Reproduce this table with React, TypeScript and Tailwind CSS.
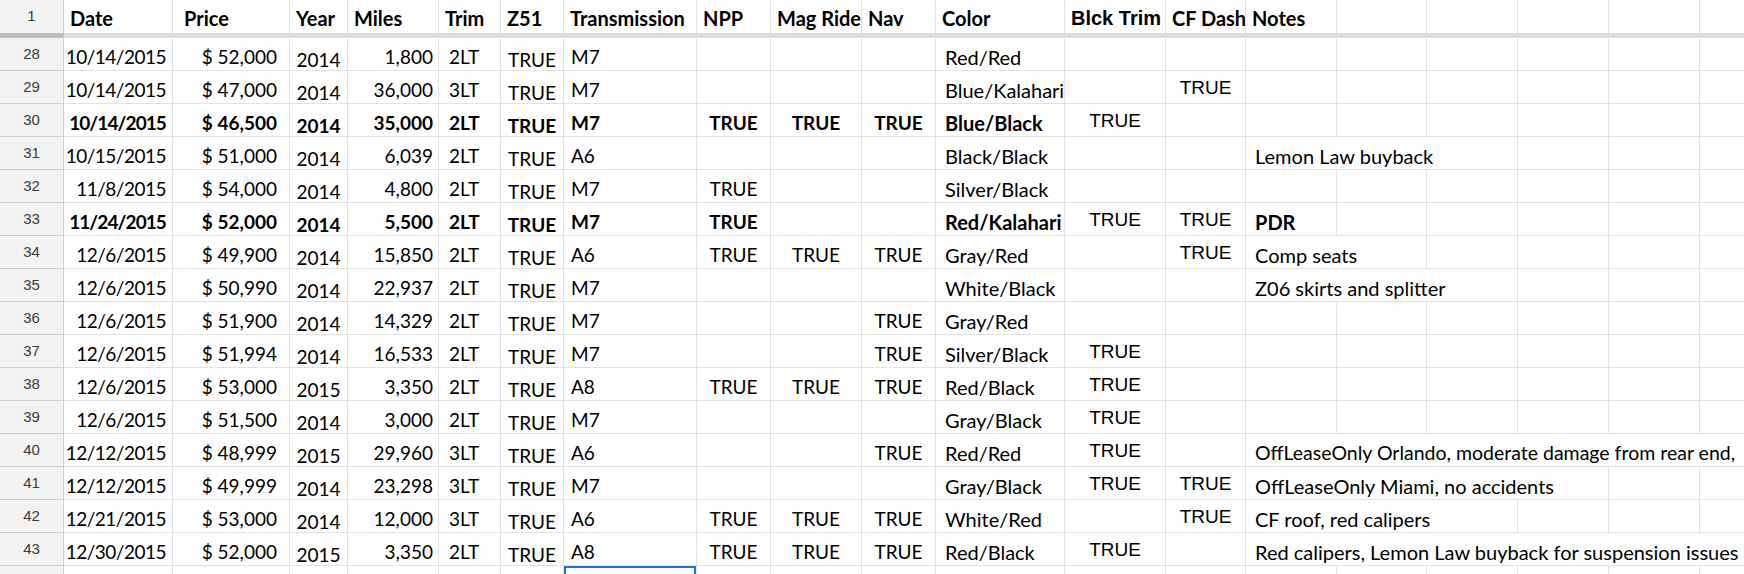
type Row = {
  n: number;
  bold?: boolean;
  date: string;
  price: string;
  year: string;
  miles: string;
  trim: string;
  trans: string;
  npp?: boolean;
  mag?: boolean;
  nav?: boolean;
  color: string;
  blck?: boolean;
  cf?: boolean;
  notes?: string;
  span?: number;
  tight?: boolean;
};

const rows: Row[] = [
  { n: 28, date: '10/14/2015', price: '$ 52,000', year: '2014', miles: '1,800', trim: '2LT', trans: 'M7', color: 'Red/Red' },
  { n: 29, date: '10/14/2015', price: '$ 47,000', year: '2014', miles: '36,000', trim: '3LT', trans: 'M7', color: 'Blue/Kalahari', cf: true },
  { n: 30, bold: true, date: '10/14/2015', price: '$ 46,500', year: '2014', miles: '35,000', trim: '2LT', trans: 'M7', npp: true, mag: true, nav: true, color: 'Blue/Black', blck: true },
  { n: 31, date: '10/15/2015', price: '$ 51,000', year: '2014', miles: '6,039', trim: '2LT', trans: 'A6', color: 'Black/Black', notes: 'Lemon Law buyback', span: 3 },
  { n: 32, date: '11/8/2015', price: '$ 54,000', year: '2014', miles: '4,800', trim: '2LT', trans: 'M7', npp: true, color: 'Silver/Black' },
  { n: 33, bold: true, date: '11/24/2015', price: '$ 52,000', year: '2014', miles: '5,500', trim: '2LT', trans: 'M7', npp: true, color: 'Red/Kalahari', blck: true, cf: true, notes: 'PDR' },
  { n: 34, date: '12/6/2015', price: '$ 49,900', year: '2014', miles: '15,850', trim: '2LT', trans: 'A6', npp: true, mag: true, nav: true, color: 'Gray/Red', cf: true, notes: 'Comp seats', span: 2 },
  { n: 35, date: '12/6/2015', price: '$ 50,990', year: '2014', miles: '22,937', trim: '2LT', trans: 'M7', color: 'White/Black', notes: 'Z06 skirts and splitter', span: 3 },
  { n: 36, date: '12/6/2015', price: '$ 51,900', year: '2014', miles: '14,329', trim: '2LT', trans: 'M7', nav: true, color: 'Gray/Red' },
  { n: 37, date: '12/6/2015', price: '$ 51,994', year: '2014', miles: '16,533', trim: '2LT', trans: 'M7', nav: true, color: 'Silver/Black', blck: true },
  { n: 38, date: '12/6/2015', price: '$ 53,000', year: '2015', miles: '3,350', trim: '2LT', trans: 'A8', npp: true, mag: true, nav: true, color: 'Red/Black', blck: true },
  { n: 39, date: '12/6/2015', price: '$ 51,500', year: '2014', miles: '3,000', trim: '2LT', trans: 'M7', color: 'Gray/Black', blck: true },
  { n: 40, date: '12/12/2015', price: '$ 48,999', year: '2015', miles: '29,960', trim: '3LT', trans: 'A6', nav: true, color: 'Red/Red', blck: true, notes: 'OffLeaseOnly Orlando, moderate damage from rear end,', span: 6, tight: true },
  { n: 41, date: '12/12/2015', price: '$ 49,999', year: '2014', miles: '23,298', trim: '3LT', trans: 'M7', color: 'Gray/Black', blck: true, cf: true, notes: 'OffLeaseOnly Miami, no accidents', span: 4 },
  { n: 42, date: '12/21/2015', price: '$ 53,000', year: '2014', miles: '12,000', trim: '3LT', trans: 'A6', npp: true, mag: true, nav: true, color: 'White/Red', cf: true, notes: 'CF roof, red calipers', span: 3 },
  { n: 43, date: '12/30/2015', price: '$ 52,000', year: '2015', miles: '3,350', trim: '2LT', trans: 'A8', npp: true, mag: true, nav: true, color: 'Red/Black', blck: true, notes: 'Red calipers, Lemon Law buyback for suspension issues', span: 6 },
];

const gridCols =
  'grid grid-cols-[64px_109px_117px_58px_91px_62px_63px_133px_74px_91px_74px_129px_101px_80px_91px_90px_91px_91px_91px_91px]';

const cell = 'flex h-full items-center overflow-hidden whitespace-nowrap border-r border-b border-[#e2e2e2]';
const arial = "font-['Liberation_Sans',Arial,sans-serif] font-normal text-[19px]";

const spanClass: Record<number, string> = {
  1: '',
  2: 'col-span-2',
  3: 'col-span-3',
  4: 'col-span-4',
  6: 'col-span-6',
};

function RowNum({ n }: { n?: number | string }) {
  return (
    <div className="flex h-full items-center justify-center border-r border-b border-[#d0d0d0] bg-[#f3f3f3] font-['Liberation_Sans',Arial,sans-serif] text-[15px] font-normal text-[#3c3c3c]">
      {n}
    </div>
  );
}

function DataRow({ r }: { r: Row }) {
  const span = r.span ?? 1;
  const weight = r.bold ? 'font-bold' : 'font-normal';
  const fillers = Array.from({ length: 6 - span });

  return (
    <div className={`${gridCols} h-[33px] ${weight}`}>
      <RowNum n={r.n} />
      <div className={`${cell} justify-end pt-[6px] pr-[6px] ${r.bold ? 'tracking-[-0.9px]' : 'tracking-[-0.5px]'}`}>{r.date}</div>
      <div className={`${cell} justify-end pt-[6px] pr-[12px]`}>{r.price}</div>
      <div className={`${cell} justify-center pt-[13px]`}>{r.year}</div>
      <div className={`${cell} justify-end pt-[6px] pr-[5px]`}>{r.miles}</div>
      <div className={`${cell} pt-[6px] pl-[10px]`}>{r.trim}</div>
      <div className={`${cell} justify-center pt-[13px]`}>TRUE</div>
      <div className={`${cell} pt-[6px] pl-[7px]`}>{r.trans}</div>
      <div className={`${cell} justify-center pt-[6px]`}>{r.npp ? 'TRUE' : ''}</div>
      <div className={`${cell} justify-center pt-[6px]`}>{r.mag ? 'TRUE' : ''}</div>
      <div className={`${cell} justify-center pt-[6px]`}>{r.nav ? 'TRUE' : ''}</div>
      <div className={`${cell} pt-[6px] pl-[9px] text-[20px]`}>{r.color}</div>
      <div className={`${cell} ${arial} justify-center pt-[3px]`}>{r.blck ? 'TRUE' : ''}</div>
      <div className={`${cell} ${arial} justify-center pt-[3px]`}>{r.cf ? 'TRUE' : ''}</div>
      <div className={`${cell} ${spanClass[span]} pt-[6px] pl-[9px] ${r.tight ? 'text-[19.5px]' : 'text-[20px]'}`}>
        {r.notes ?? ''}
      </div>
      {fillers.map((_, i) => (
        <div key={i} className={cell} />
      ))}
    </div>
  );
}

const headers = ['Date', 'Price', 'Year', 'Miles', 'Trim', 'Z51', 'Transmission', 'NPP', 'Mag Ride', 'Nav', 'Color', 'Blck Trim', 'CF Dash', 'Notes'];

export default function App() {
  return (
    <div className="h-[574px] w-[1744px] overflow-hidden bg-white font-['Lato',sans-serif] text-[19px] text-black">
      {/* frozen header row */}
      <div className={`${gridCols} h-[33px] font-bold`}>
        <div className="flex h-full items-center justify-center border-r border-[#d0d0d0] bg-[#f3f3f3] font-['Liberation_Sans',Arial,sans-serif] text-[15px] font-normal text-[#3c3c3c]">
          1
        </div>
        {headers.map((h) => (
          <div
            key={h}
            className={`flex h-full items-center overflow-hidden whitespace-nowrap border-r border-[#e2e2e2] ${
              h === 'Price' ? 'pl-[11px]' : 'pl-[6px]'
            } ${h === 'Blck Trim' ? "pt-[3px] font-['Liberation_Sans',Arial,sans-serif] text-[20px]" : 'pt-[2px] text-[20px]'}`}
          >
            {h}
          </div>
        ))}
        {Array.from({ length: 5 }).map((_, i) => (
          <div key={i} className="h-full border-r border-[#e2e2e2]" />
        ))}
      </div>

      {/* freeze divider */}
      <div className="flex h-[5px]">
        <div className="w-[64px] bg-[#bdbdbd]" />
        <div className="flex-1 bg-[#dadce0]" />
      </div>

      {rows.map((r) => (
        <DataRow key={r.n} r={r} />
      ))}

      {/* partial row 44 with selected cell */}
      <div className={`${gridCols} h-[33px]`}>
        <RowNum />
        {Array.from({ length: 19 }).map((_, i) =>
          i === 6 ? (
            <div key={i} className="relative h-full border-r border-b border-[#e2e2e2]">
              <div className="absolute top-0 left-0 h-[36px] w-[132px] border-2 border-[#1a73e8]" />
            </div>
          ) : (
            <div key={i} className={cell} />
          )
        )}
      </div>
    </div>
  );
}
